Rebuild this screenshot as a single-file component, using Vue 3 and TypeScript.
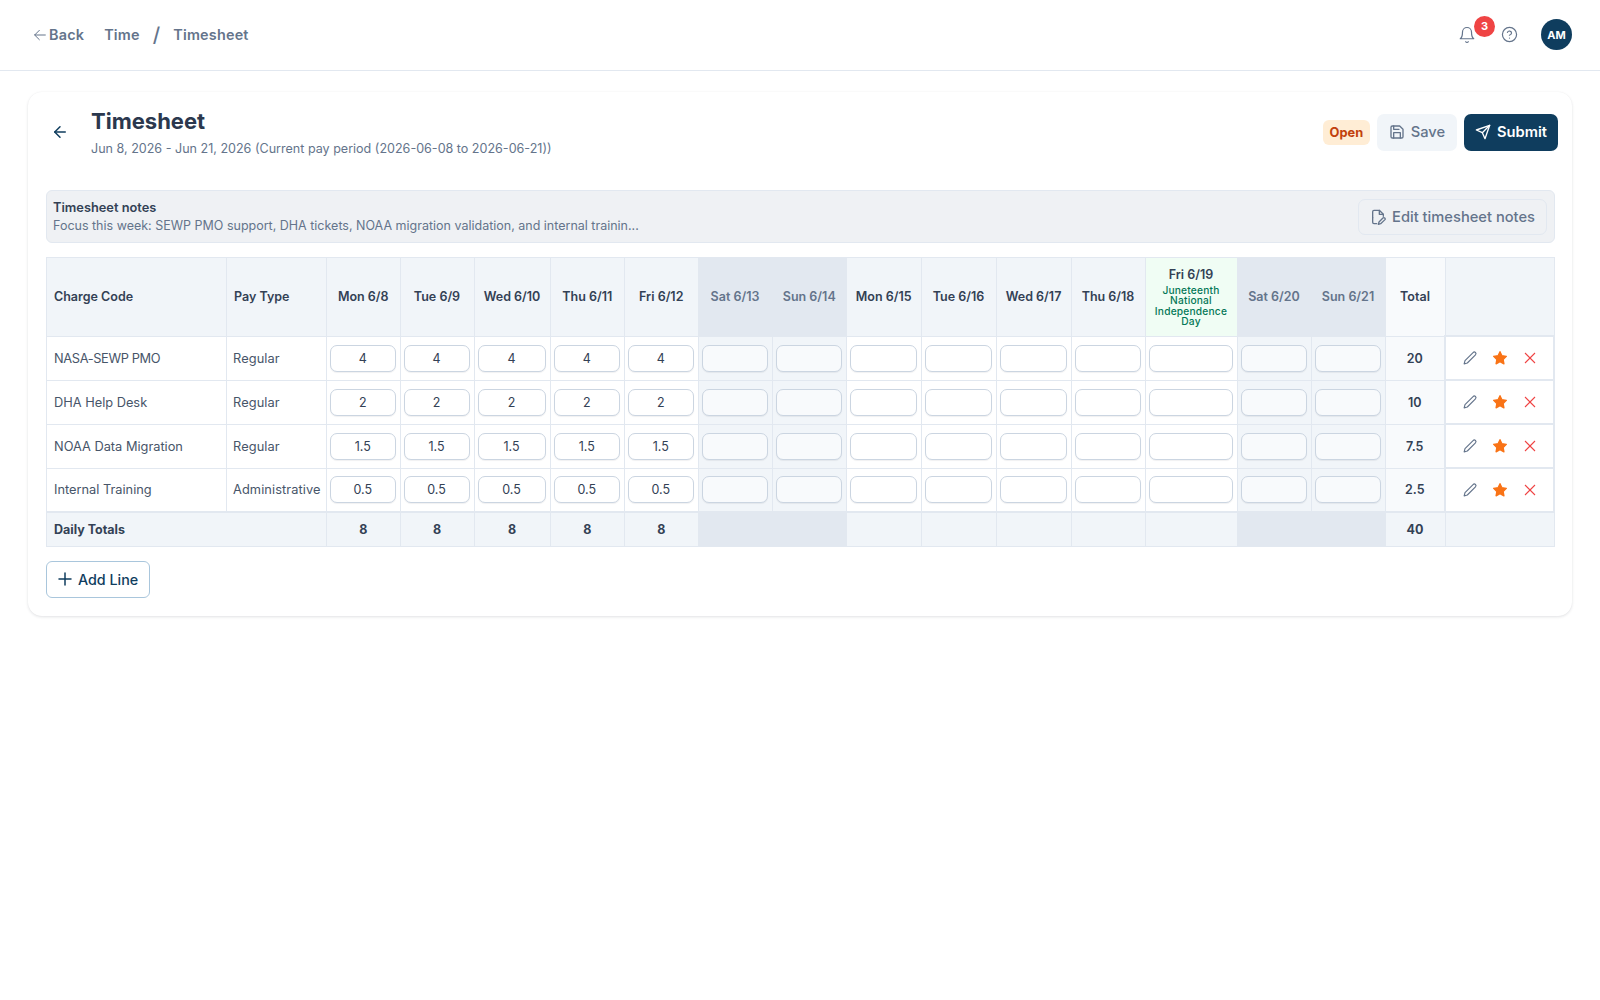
<script setup lang="ts">
interface Line { code: string; pay: string; v: string; total: string; tight?: boolean }
const lines: Line[] = [
  { code: 'NASA-SEWP PMO', pay: 'Regular', v: '4', total: '20', tight: true },
  { code: 'DHA Help Desk', pay: 'Regular', v: '2', total: '10' },
  { code: 'NOAA Data Migration', pay: 'Regular', v: '1.5', total: '7.5' },
  { code: 'Internal Training', pay: 'Administrative', v: '0.5', total: '2.5' },
]
interface Day { label: string; kind: '' | 'we' | 'hol'; w: number; filled: boolean }
const days: Day[] = [
  { label: 'Mon 6/8', kind: '', w: 73.5, filled: true },
  { label: 'Tue 6/9', kind: '', w: 74, filled: true },
  { label: 'Wed 6/10', kind: '', w: 76, filled: true },
  { label: 'Thu 6/11', kind: '', w: 74.5, filled: true },
  { label: 'Fri 6/12', kind: '', w: 73.5, filled: true },
  { label: 'Sat 6/13', kind: 'we', w: 74, filled: false },
  { label: 'Sun 6/14', kind: 'we', w: 74.5, filled: false },
  { label: 'Mon 6/15', kind: '', w: 74.5, filled: false },
  { label: 'Tue 6/16', kind: '', w: 75, filled: false },
  { label: 'Wed 6/17', kind: '', w: 75, filled: false },
  { label: 'Thu 6/18', kind: '', w: 74, filled: false },
  { label: 'Fri 6/19', kind: 'hol', w: 92, filled: false },
  { label: 'Sat 6/20', kind: 'we', w: 74, filled: false },
  { label: 'Sun 6/21', kind: 'we', w: 74, filled: false },
]
</script>

<template>
  <div class="page">
    <header class="topbar">
      <div class="crumbs">
        <a class="back">
          <svg width="16" height="16" viewBox="0 0 24 24" fill="none" stroke="currentColor" stroke-width="1.5" stroke-linecap="round" stroke-linejoin="round"><path d="M20 12H4"/><path d="M11 19l-7-7 7-7"/></svg>
          Back
        </a>
        <span class="crumb">Time</span>
        <span class="sep">/</span>
        <span class="crumb">Timesheet</span>
      </div>
      <div class="top-right">
        <span class="bell">
          <svg width="18" height="18" viewBox="0 0 24 24" fill="none" stroke="#64748b" stroke-width="1.6" stroke-linecap="round" stroke-linejoin="round"><path d="M6 8a6 6 0 0 1 12 0c0 7 3 9 3 9H3s3-2 3-9"/><path d="M10.3 21a1.94 1.94 0 0 0 3.4 0"/></svg>
          <span class="badge">3</span>
        </span>
        <svg class="help" width="17" height="17" viewBox="0 0 24 24" fill="none" stroke="#64748b" stroke-width="1.7" stroke-linecap="round" stroke-linejoin="round"><circle cx="12" cy="12" r="10"/><path d="M9.1 9a3 3 0 0 1 5.8 1c0 2-3 3-3 3"/><path d="M12 17h.01"/></svg>
        <span class="avatar">AM</span>
      </div>
    </header>

    <main class="card">
      <div class="head">
        <div class="head-left">
          <svg class="head-back" width="18" height="18" viewBox="0 0 24 24" fill="none" stroke="#0f3d5e" stroke-width="2" stroke-linecap="round" stroke-linejoin="round"><path d="M19 12H5"/><path d="M12 19l-7-7 7-7"/></svg>
          <div>
            <h1>Timesheet</h1>
            <p>Jun 8, 2026 - Jun 21, 2026 (Current pay period (2026-06-08 to 2026-06-21))</p>
          </div>
        </div>
        <div class="head-right">
          <span class="status">Open</span>
          <button class="btn save">
            <svg width="16" height="16" viewBox="0 0 24 24" fill="none" stroke="currentColor" stroke-width="2" stroke-linecap="round" stroke-linejoin="round"><path d="M19 21H5a2 2 0 0 1-2-2V5a2 2 0 0 1 2-2h11l5 5v11a2 2 0 0 1-2 2z"/><path d="M17 21v-8H7v8"/><path d="M7 3v5h8"/></svg>
            Save
          </button>
          <button class="btn submit">
            <svg width="16" height="16" viewBox="0 0 24 24" fill="none" stroke="currentColor" stroke-width="2" stroke-linecap="round" stroke-linejoin="round"><path d="M22 2L11 13"/><path d="M22 2l-7 20-4-9-9-4z"/></svg>
            Submit
          </button>
        </div>
      </div>

      <section class="notes">
        <div>
          <div class="notes-title">Timesheet notes</div>
          <div class="notes-text">Focus this week: SEWP PMO support, DHA tickets, NOAA migration validation, and internal trainin...</div>
        </div>
        <button class="btn edit">
          <svg width="16" height="16" viewBox="0 0 24 24" fill="none" stroke="currentColor" stroke-width="2" stroke-linecap="round" stroke-linejoin="round"><path d="M4 13V4a2 2 0 0 1 2-2h8l6 6v3"/><path d="M14 2v6h6"/><path d="M10 22H6a2 2 0 0 1-2-2v-7"/><path d="M19.4 13.6a1.9 1.9 0 0 1 2.7 2.7L16 22l-3.5 1 1-3.5z"/></svg>
          Edit timesheet notes
        </button>
      </section>

      <table class="grid">
        <colgroup>
          <col style="width: 180px" />
          <col style="width: 100px" />
          <col v-for="d in days" :key="d.label" :style="{ width: d.w + 'px' }" />
          <col style="width: 60px" />
          <col style="width: 109px" />
        </colgroup>
        <thead>
          <tr>
            <th class="left">Charge Code</th>
            <th class="left">Pay Type</th>
            <th v-for="d in days" :key="d.label" :class="d.kind">
              {{ d.label }}
              <div v-if="d.kind === 'hol'" class="hol-name">Juneteenth National Independence Day</div>
            </th>
            <th class="total-h">Total</th>
            <th></th>
          </tr>
        </thead>
        <tbody>
          <tr v-for="l in lines" :key="l.code">
            <td class="text" :class="{ tight: l.tight }">{{ l.code }}</td>
            <td class="text pay">{{ l.pay }}</td>
            <td v-for="d in days" :key="d.label" class="cell" :class="d.kind">
              <input class="hours" :value="d.filled ? l.v : ''" />
            </td>
            <td class="total">{{ l.total }}</td>
            <td class="actions">
              <div class="acts">
                <svg width="16" height="16" viewBox="0 0 24 24" fill="none" stroke="#64748b" stroke-width="1.7" stroke-linecap="round" stroke-linejoin="round"><path d="M16.6 3.8a2.5 2.5 0 0 1 3.6 3.5L8 19.5l-4.8 1.3 1.3-4.8z"/></svg>
                <svg width="16" height="16" viewBox="0 0 24 24" fill="#f97316" stroke="#f97316" stroke-width="2" stroke-linejoin="round"><path d="M12 2.5l2.9 6.1 6.6.9-4.8 4.6 1.2 6.6-5.9-3.2-5.9 3.2 1.2-6.6-4.8-4.6 6.6-.9z"/></svg>
                <svg width="16" height="16" viewBox="0 0 24 24" fill="none" stroke="#ef4444" stroke-width="1.7"><path d="M19.5 4.5l-15 15"/><path d="M4.5 4.5l15 15"/></svg>
              </div>
            </td>
          </tr>
        </tbody>
        <tfoot>
          <tr>
            <td class="left" colspan="2">Daily Totals</td>
            <td v-for="(d, i) in days" :key="d.label" :class="d.kind === 'hol' ? '' : d.kind">{{ i < 5 ? '8' : '' }}</td>
            <td>40</td>
            <td></td>
          </tr>
        </tfoot>
      </table>

      <button class="add">
        <svg width="18" height="18" viewBox="0 0 24 24" fill="none" stroke="currentColor" stroke-width="2" stroke-linecap="round"><path d="M12 4v16"/><path d="M4 12h16"/></svg>
        Add Line
      </button>
    </main>
  </div>
</template>

<style>
html, body { background: #fff; }
</style>

<style scoped>
.page { min-height: 1000px; background: #fff; font-family: Inter, "Liberation Sans", sans-serif; color: #334155; }
.topbar { height: 71px; box-sizing: border-box; border-bottom: 1px solid #e2e8f0; display: flex; align-items: center; justify-content: space-between; padding: 0 28px 1px 32px; }
.crumbs { display: flex; align-items: center; font-size: 14.4px; font-weight: 600; color: #64748b; letter-spacing: 0.2px; }
.back { display: flex; align-items: center; gap: 1px; margin-right: 20px; }
.sep { margin: 0 13px; font-size: 20px; font-weight: 500; }
.top-right { display: flex; align-items: center; }
.bell { position: relative; display: flex; margin-right: 25px; }
.badge { position: absolute; top: -10px; left: 16px; width: 21px; height: 21px; border-radius: 50%; background: #ef4444; color: #fff; font-size: 11px; font-weight: 700; display: flex; align-items: center; justify-content: center; }
.help { margin-right: 23px; }
.avatar { width: 31px; height: 31px; border-radius: 50%; background: #0f3d5e; color: #fff; font-size: 11px; font-weight: 700; display: flex; align-items: center; justify-content: center; }
.card { margin: 21px 28px 0; height: 524px; box-sizing: border-box; border-radius: 14px; background: #fff; box-shadow: 0 1px 3px rgba(15, 23, 42, 0.12), 0 0 1px rgba(15, 23, 42, 0.05); padding: 8px 14px 0 18px; }
.head { display: flex; justify-content: space-between; align-items: center; height: 64px; padding: 0 0 0 5px; }
.head-left { display: flex; align-items: center; gap: 22px; }
.head-back { flex: none; }
h1 { margin: 0; font-size: 22px; line-height: 30px; font-weight: 700; color: #2b384e; }
p { margin: 4px 0 0; font-size: 12.55px; line-height: 18px; color: #64748b; }
.head-right { display: flex; align-items: center; gap: 7px; }
.status { height: 25px; padding: 0 6.5px; border-radius: 6px; background: #ffedd5; color: #c2410c; font-size: 12.8px; font-weight: 700; display: flex; align-items: center; }
.btn { display: flex; align-items: center; border: 0; font-family: inherit; font-size: 14.7px; font-weight: 500; gap: 6px; border-radius: 7px; height: 37px; padding: 0 11px; }
.save { background: #f1f5f9; color: #64748b; padding: 0 12px; }
.submit { background: #0f3d5e; color: #fff; font-weight: 600; }
.notes { margin-top: 26px; height: 53px; box-sizing: border-box; display: flex; align-items: center; justify-content: space-between; padding: 0 7px 0 6px; background: #eff1f4; border: 1px solid #e2e8f0; border-radius: 6px; width: 1509px; }
.notes-title { font-size: 12.8px; font-weight: 600; color: #334155; line-height: 17px; }
.notes-text { font-size: 12.5px; color: #64748b; line-height: 19px; }
.edit { background: transparent; border: 1px solid #e2e8f0; color: #64748b; height: 36px; }
.grid { margin-top: 14px; width: 1509px; table-layout: fixed; border-collapse: collapse; font-size: 12.5px; }
th, td { border: 1px solid #e2e8f0; padding: 0; text-align: center; box-sizing: border-box; }
thead th { height: 78.5px; background: #f1f5f9; font-weight: 600; color: #334155; font-size: 12.5px; }
thead th.left, tfoot td.left { text-align: left; padding-left: 7px; }
thead th.we { background: #e2e8f0; color: #64748b; }
thead th.we + th.we { border-left-color: #e2e8f0; }
thead th.hol { background: #f0fdf4; color: #334155; }
.hol-name { margin-top: 3px; padding: 0 6px; font-size: 10.2px; line-height: 10.5px; font-weight: 500; color: #047857; letter-spacing: 0.2px; }
thead th.total-h { background: #f8fafc; }
tbody td { height: 44px; }
td.text { text-align: left; padding-left: 7px; color: #475569; white-space: nowrap; font-size: 12.8px; }
td.tight { letter-spacing: -0.35px; }
td.pay { padding-left: 6px; letter-spacing: 0.1px; }
td.cell.we { background: #f1f5f9; }
.hours { width: calc(100% - 7px); height: 27px; box-sizing: border-box; border: 1px solid #cbd5e1; border-radius: 7px; background: #fff; text-align: center; font-family: inherit; font-size: 12.5px; color: #334155; padding: 0; display: block; margin: 0 4px 0 3px; box-shadow: 0 1px 1px rgba(15, 23, 42, 0.06); outline: none; }
td.cell.we .hours { background: #f8fafc; }
td.total { background: #f8fafc; font-weight: 600; color: #334155; }
td.actions { border-width: 2px; background: #fff; }
.acts { display: flex; justify-content: center; gap: 14px; }
tfoot td { height: 34px; border-top-width: 2px; background: #f1f5f9; font-weight: 700; color: #334155; }
tfoot td.we { background: #e2e8f0; border-left-color: #e2e8f0; border-right-color: #e2e8f0; }
.add { margin-top: 14px; display: flex; align-items: center; gap: 4px; height: 37px; width: 104px; box-sizing: border-box; padding: 0 0 0 9px; background: #fff; border: 1px solid #a9c6dc; border-radius: 6px; color: #0f3d5e; font-family: inherit; font-size: 14.3px; font-weight: 500; }
</style>
